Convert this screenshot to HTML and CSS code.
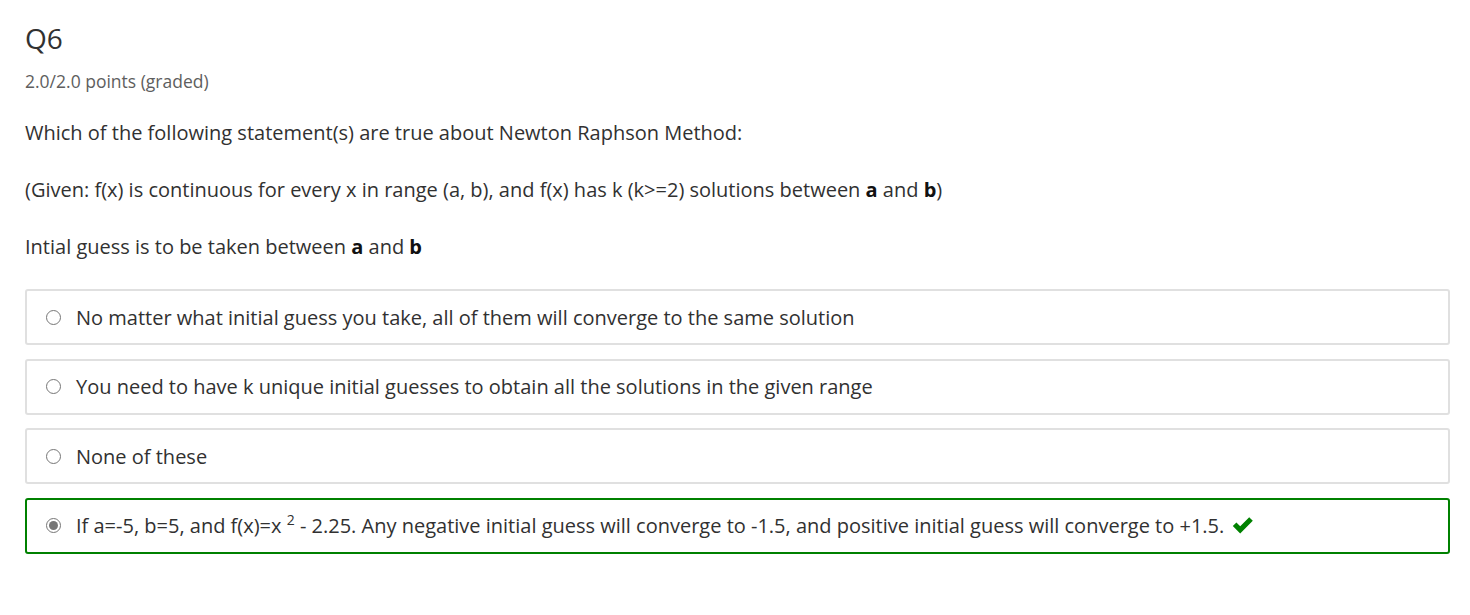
FILE: index.html
```html
<!DOCTYPE html>
<html>
<head>
<meta charset="utf-8">
<link rel="stylesheet" href="styles.css">
</head>
<body>
<div class="problem">
  <h3 class="title">Q6</h3>
  <div class="points">2.0/2.0 points (graded)</div>
  <p class="para">Which of the following statement(s) are true about Newton Raphson Method:</p>
  <p class="para">(Given: f(x) is continuous for every x in range (a, b), and f(x) has k (k&gt;=2) solutions between <b>a</b> and <b>b</b>)</p>
  <p class="para">Intial guess is to be taken between <b>a</b> and <b>b</b></p>
  <div class="options">
    <label class="option"><span class="radio"></span><span class="opt-text">No matter what initial guess you take, all of them will converge to the same solution</span></label>
    <label class="option"><span class="radio"></span><span class="opt-text">You need to have k unique initial guesses to obtain all the solutions in the given range</span></label>
    <label class="option"><span class="radio"></span><span class="opt-text">None of these</span></label>
    <label class="option correct"><span class="radio checked"></span><span class="opt-text">If a=-5, b=5, and f(x)=x <sup>2</sup> - 2.25. Any negative initial guess will converge to -1.5, and positive initial guess will converge to +1.5.</span>
      <svg class="check" width="22" height="17" viewBox="0 0 22 17"><path d="M0.8 9 L4.4 5.4 L8.2 9.2 L17.2 0.2 L20.8 3.8 L8.2 16.4 Z" fill="#008100"/></svg>
    </label>
  </div>
</div>
</body>
</html>
```
FILE: styles.css
```css
* { box-sizing: border-box; }
body {
  margin: 0;
  background: #fff;
  font-family: "Open Sans", "Liberation Sans", sans-serif;
  color: #313131;
}
.problem {
  padding: 20px 20px 0 25px;
}
.title {
  margin: 0;
  font-size: 28px;
  font-weight: 400;
  line-height: 36px;
  color: #313131;
}
.points {
  margin-top: 13px;
  font-size: 17.5px;
  line-height: 24px;
  color: #5e5e5e;
}
.para {
  margin: 26px 0 0 0;
  font-size: 20px;
  line-height: 28px;
}
.para + .para { margin-top: 29px; }
.para b { font-weight: 700; color: #111; }
.options {
  margin-top: 28px;
  display: flex;
  flex-direction: column;
  gap: 13.5px;
  width: 1425px;
}
.option {
  display: flex;
  align-items: center;
  height: 56px;
  border: 2px solid #e0e0e0;
  border-radius: 3px;
  padding-left: 19px;
  font-size: 20px;
  color: #313131;
}
.option.correct { border-color: #008100; }
.radio {
  width: 15px;
  height: 15px;
  border: 1px solid #767676;
  border-radius: 50%;
  margin-right: 15px;
  flex: none;
  display: flex;
  align-items: center;
  justify-content: center;
}
.radio.checked::after {
  content: "";
  width: 9px;
  height: 9px;
  border-radius: 50%;
  background: #767676;
}
.opt-text sup { font-size: 14px; line-height: 0; }
.check { margin-left: 8px; flex: none; }
```
